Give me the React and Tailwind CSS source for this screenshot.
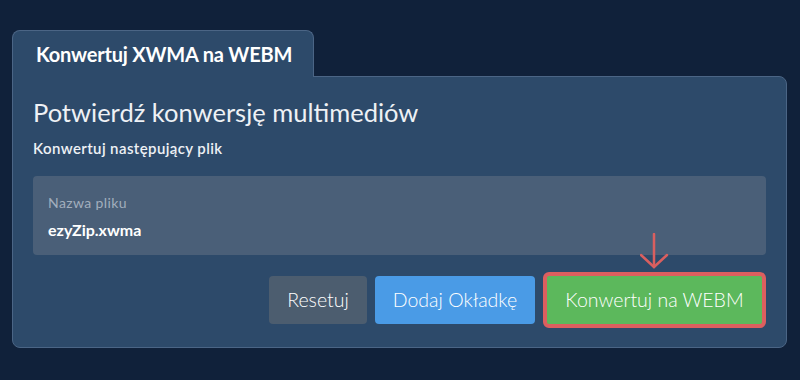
export default function App() {
  return (
    <div className="h-[380px] w-[800px] bg-[#10213a] px-3 pt-[30px] font-['Lato','Liberation_Sans',sans-serif] text-white">
      {/* Tab */}
      <div className="relative z-10 -mb-px flex h-[47px] w-[302px] items-center rounded-t-lg border border-b-0 border-[#4b6585] bg-[#2d4a6a] pl-[23px]">
        <span className="text-[20px] font-bold tracking-[-0.2px]">Konwertuj XWMA na WEBM</span>
      </div>

      {/* Panel */}
      <div className="h-[272px] w-[775px] rounded-b-lg rounded-tr-lg border border-[#4b6585] bg-[#2d4a6a] px-5 pt-[19px]">
        <h1 className="text-[25.5px] leading-8 text-[#eef1f5]">Potwierdź konwersję multimediów</h1>
        <p className="mt-[10px] text-[15px] font-semibold leading-5 tracking-[0.4px] text-[#eef1f5]">Konwertuj następujący plik</p>

        <div className="mt-[18px] h-[79px] rounded bg-[#4a5f78] px-[15px] pt-[17px]">
          <div className="text-[14px] leading-5 tracking-[0.4px] text-[#a2aebd]">Nazwa pliku</div>
          <div className="mt-[5px] text-[16px] font-bold leading-6">ezyZip.xwma</div>
        </div>

        <div className="mt-[17px] flex items-center justify-end gap-2">
          <button className="h-12 w-[98px] rounded bg-[#4c5d6f] text-[19.5px] font-light text-white">Resetuj</button>
          <button className="h-12 w-[160px] rounded bg-[#4a9be6] text-[19.5px] font-light text-white">Dodaj Okładkę</button>
          <div className="relative">
            <svg className="absolute left-[97px] top-[-39px]" width="30" height="38" viewBox="0 0 30 38" fill="none" stroke="#d95f5f" strokeWidth="2.5" strokeLinecap="round">
              <path d="M14 1 L14 34" />
              <path d="M1 22 L14 34 L27 22" />
            </svg>
            <button className="h-14 w-[223px] rounded-md border-4 border-[#dc5f5f] bg-[#5cb85c] text-[19.5px] font-light text-white">Konwertuj na WEBM</button>
          </div>
        </div>
      </div>
    </div>
  )
}
